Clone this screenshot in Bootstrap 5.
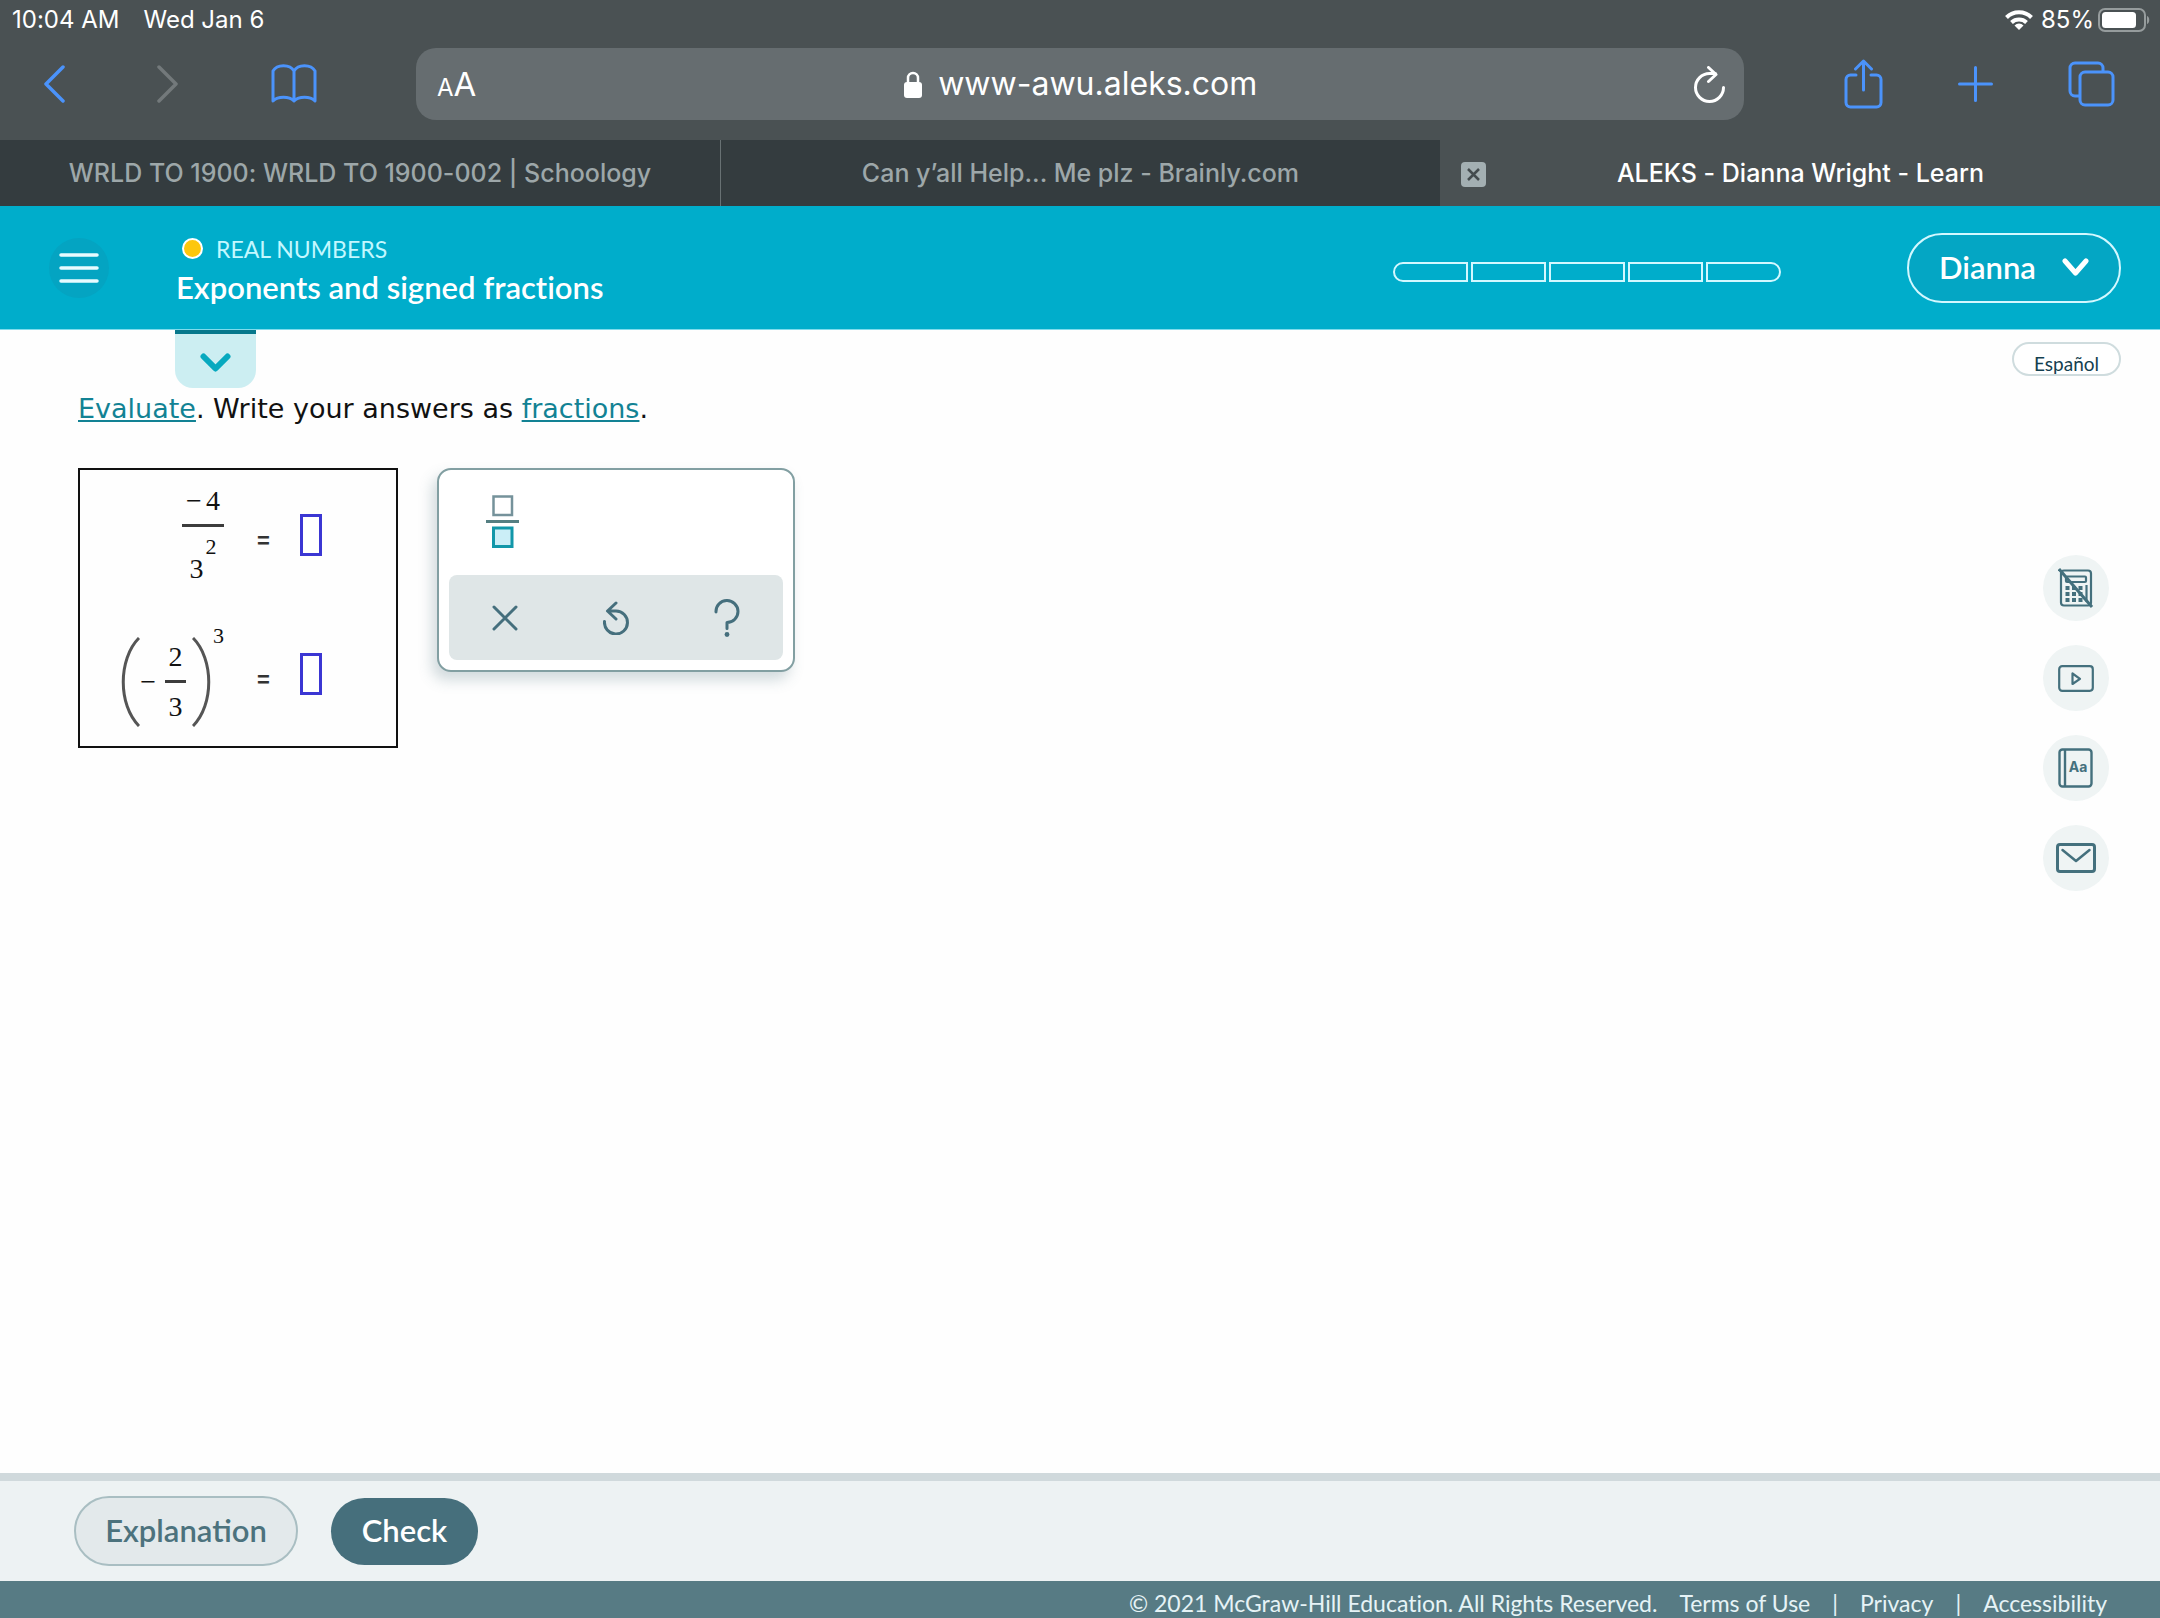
<!DOCTYPE html>
<html lang="en">
<head>
<meta charset="utf-8">
<meta name="viewport" content="width=device-width, initial-scale=1">
<title>ALEKS - Dianna Wright - Learn</title>
<link href="https://cdn.jsdelivr.net/npm/bootstrap@5.3.0/dist/css/bootstrap.min.css" rel="stylesheet">
<style>
  body { background: #fefefe; color: #111; font-family: Lato, "Open Sans", sans-serif; font-variant-ligatures: none; }
  svg { display: block; flex: none; }
  .bare { background: none; border: 0; padding: 0; }
  .inherit { color: inherit; }

  /* Browser chrome */
  .chrome { background: #4a5153; color: #fff; font-family: Inter, Roboto, sans-serif; }
  .status { height: 40px; padding: 0 10px 0 12px; font-size: 24px; line-height: 40px; }
  .status-left { gap: 24px; }
  .tools { height: 100px; padding: 8px 45px 20px 43px; color: #4b93fb; }
  .tools-left { gap: 92px; margin-right: 99px; }
  .tools-right { gap: 75px; margin-left: 100px; }
  .forward { color: #73797b; }
  .address { height: 72px; border-radius: 20px; background: #666d70; padding: 0 19px 0 21px; color: #fff; }
  .address-size { font-size: 33px; line-height: 40px; padding-top: 3px; }
  .address-size small { font-size: 24px; }
  .address-input { width: 328px; color: #fff; font-size: 32px; line-height: 44px; outline: 0; }
  .tabs { height: 66px; }
  .tab-item { width: 33.3333%; padding-top: 2px; background: #343c3f; color: #9da7a9; font-size: 25px; font-weight: 500; }
  .tab-item + .tab-item { border-left: 1px solid #687173; }
  .tab-item.current { background: none; border: 0; color: #fff; padding: 2px 21px 0; }
  .tab-close { width: 25px; height: 25px; border-radius: 4px; background: #a3afb2; color: #434b4e; }
  .tab-item a { color: inherit; }

  /* Lesson header */
  .lesson { height: 124px; padding: 0 39px 0 49px; background: #00adcb; color: #fff; border-bottom: 1px solid #7fdcec; }
  .menu-btn { width: 60px; height: 60px; background: #04a4c2; color: #e8fbff; }
  .heading { margin-left: 67px; padding-top: 7px; }
  .topic { gap: 13px; font-size: 23px; line-height: 32px; color: #c3f8ff; padding-left: 6px; }
  .dot { width: 21px; height: 21px; background: #fdc70c; border: 2px solid #fff; }
  .lesson-title { font-size: 31px; line-height: 45px; font-weight: 600; }
  .steps { width: 388px; gap: 3px; margin: 8px 126px 0 0; }
  .steps span { flex: 1; height: 20px; border: 2px solid #d3f8ff; }
  .steps span:first-child { border-radius: 10px 0 0 10px; }
  .steps span:last-child { border-radius: 0 10px 10px 0; }
  .user-btn { width: 214px; height: 70px; border: 2px solid #d3f8ff; border-radius: 35px; background: #04a6c4; color: #fff; font-size: 31px; font-weight: 600; gap: 26px; }

  /* Question */
  .work { padding: 0 0 0 78px; }
  .drawer { width: 81px; height: 58px; margin-left: 97px; border-top: 4px solid #07788c; border-radius: 0 0 18px 18px; background: #cceef2; color: #07a9bf; padding-top: 4px; }
  .prompt { font-family: "DejaVu Sans", sans-serif; font-size: 27px; line-height: 36px; color: #111; margin: 3px 0 41px; }
  .prompt a { color: #128294; }
  .panels { gap: 39px; }
  .problem { width: 320px; height: 280px; border: 2px solid #111; padding: 13px 74px 0 0; font-family: "Liberation Serif", serif; font-size: 28px; line-height: 36px; color: #111; }
  .equation { height: 139px; }
  .fraction { width: 42px; }
  .fraction.narrow { width: 21px; margin: 0 6px 0 9px; }
  .bar { width: 100%; height: 3px; margin: 5px 0 6px; background: #3c3c3c; }
  .base { padding-top: 18px; }
  .power { font-size: 22px; line-height: 28px; margin-left: 2px; }
  .group { height: 90px; margin-top: 15px; color: #555; }
  .group span { color: #111; }
  .equals { width: 13px; margin: 44px 30px 0 33px; font: bold 22px/28px "Liberation Sans", sans-serif; color: #333; }
  .answer { width: 22px; height: 42px; margin-top: 31px; border: 3px solid #3b36d3; background: #fff; padding: 0; border-radius: 0; }
  .palette { width: 358px; height: 204px; padding: 10px; border: 2px solid #829fa2; border-radius: 14px; background: #fff; box-shadow: -5px 8px 14px #4a707d40; }
  .palette-top { height: 95px; padding: 15px 0 0 37px; }
  .palette-keys { height: 85px; border-radius: 8px; background: #dfe6e7; color: #456f7d; }
  .palette-keys button { flex: 1; }

  /* Side rail */
  .rail { padding: 12px 39px 0 0; }
  .lang { width: 109px; height: 34px; border: 2px solid #cfdcde; border-radius: 17px; font-size: 19px; line-height: 24px; padding-top: 8px; color: #14404f; }
  .helpers { gap: 24px; margin: 179px 12px 0 0; }
  .helpers button { width: 66px; height: 66px; background: #eff4f4; color: #44707d; }

  /* Bottom */
  .actions { height: 108px; border-top: 8px solid #d0d9dc; background: #edf2f3; padding: 0 74px; gap: 33px; }
  .pill { height: 70px; border-radius: 35px; font-size: 31px; line-height: 36px; font-weight: 600; padding-bottom: 3px; }
  .pill-light { width: 224px; border: 2px solid #a9bec2; background: #e3e9eb; color: #4c727d; }
  .pill-dark { width: 147px; height: 67px; background: #466f7c; color: #fff; }
  .legal { height: 37px; padding: 6px 53px 0 0; background: #577b84; color: #e6f3f6; font-size: 23px; line-height: 32px; gap: 22px; }
  .legal a { color: inherit; }
</style>
</head>
<body class="d-flex flex-column min-vh-100">

<header class="chrome">
  <div class="status d-flex justify-content-between">
    <div class="status-left d-flex"><span>10:04 AM</span><span>Wed Jan 6</span></div>
    <div class="d-flex align-items-center">
      <svg width="28" height="20" viewBox="0 0 28 20" fill="none" stroke="#fff" stroke-width="4"><path d="M1.500 7.500a17.500 17.500 0 0 1 25 0M6.500 12.500a11 11 0 0 1 15 0"/><path d="M14 20l-4.500-4.600a6.500 6.500 0 0 1 9 0z" fill="#fff" stroke="none"/></svg>
      <span class="ms-2 me-1">85%</span>
      <svg width="52" height="24" viewBox="0 0 52 24"><rect x="1" y="1" width="46" height="22" rx="6" fill="none" stroke="#969c9d" stroke-width="2"/><rect x="4" y="4" width="34" height="16" rx="3.500" fill="#fff"/><path d="M49 8c3 1 3 7 0 8z" fill="#969c9d"/></svg>
    </div>
  </div>

  <div class="tools d-flex align-items-center">
    <div class="tools-left d-flex align-items-center">
      <button class="bare inherit" aria-label="Back"><svg width="22" height="38" viewBox="0 0 22 38" fill="none" stroke="currentColor" stroke-width="3.500" stroke-linecap="round" stroke-linejoin="round"><path d="M20 2 3 19l17 17"/></svg></button>
      <button class="bare forward" aria-label="Forward"><svg width="22" height="38" viewBox="0 0 22 38" fill="none" stroke="currentColor" stroke-width="3.500" stroke-linecap="round" stroke-linejoin="round"><path d="m2 2 17 17L2 36"/></svg></button>
      <button class="bare inherit" aria-label="Bookmarks"><svg width="46" height="40" viewBox="0 0 46 40" fill="none" stroke="currentColor" stroke-width="3" stroke-linejoin="round"><path d="M23 37V7C19 0 6 0 2 7v30c5-5 16-5 21 0 5-5 16-5 21 0V7c-4-7-17-7-21 0"/></svg></button>
    </div>
    <div class="address d-flex flex-fill align-items-center justify-content-between">
      <button class="bare text-white address-size" aria-label="Text size"><small>A</small>A</button>
      <div class="d-flex align-items-center gap-3">
        <svg width="18" height="27" viewBox="0 0 18 27"><rect y="11" width="18" height="16" rx="3" fill="#fff"/><path d="M4 13V7a5 5 0 0 1 10 0v6" fill="none" stroke="#fff" stroke-width="2.500"/></svg>
        <input class="bare address-input" type="text" value="www-awu.aleks.com" aria-label="Address">
      </div>
      <button class="bare text-white" aria-label="Reload"><svg width="31" height="37" viewBox="0 0 31 37" fill="none" stroke="currentColor" stroke-width="3" stroke-linecap="round" stroke-linejoin="round"><path d="M29.500 21.500A14 14 0 1 1 15.500 7.500h6M14.500 1.500l7.500 7-7.500 7"/></svg></button>
    </div>
    <div class="tools-right d-flex align-items-center">
      <button class="bare inherit" aria-label="Share"><svg width="39" height="50" viewBox="0 0 39 50" fill="none" stroke="currentColor" stroke-width="3" stroke-linecap="round" stroke-linejoin="round"><path d="M12 16H6.500a4.500 4.500 0 0 0-4.500 4.500v23A4.500 4.500 0 0 0 6.500 48h26a4.500 4.500 0 0 0 4.500-4.500v-23a4.500 4.500 0 0 0-4.500-4.500H27M19.500 31V2M11.500 10l8-8 8 8"/></svg></button>
      <button class="bare inherit" aria-label="New tab"><svg width="35" height="36" viewBox="0 0 35 36" fill="none" stroke="currentColor" stroke-width="3" stroke-linecap="round"><path d="M17.500 1.500v33M1.500 18h32"/></svg></button>
      <button class="bare inherit" aria-label="Tabs"><svg width="47" height="46" viewBox="0 0 47 46" fill="none" stroke="currentColor" stroke-width="3"><rect x="12" y="11" width="33" height="33" rx="5"/><path d="M12 35H7a5 5 0 0 1-5-5V7a5 5 0 0 1 5-5h23a5 5 0 0 1 5 5v4"/></svg></button>
    </div>
  </div>

  <nav class="tabs d-flex" aria-label="Open tabs">
    <div class="tab-item d-flex align-items-center justify-content-center"><a class="text-decoration-none" href="#">WRLD TO 1900: WRLD TO 1900-002 | Schoology</a></div>
    <div class="tab-item d-flex align-items-center justify-content-center"><a class="text-decoration-none" href="#">Can y’all Help... Me plz - Brainly.com</a></div>
    <div class="tab-item current d-flex align-items-center">
      <button class="bare tab-close d-flex align-items-center justify-content-center" aria-label="Close tab"><svg width="13" height="13" viewBox="0 0 13 13" stroke="currentColor" stroke-width="2.500"><path d="m1 1 11 11M12 1 1 12"/></svg></button>
      <a class="flex-fill text-center text-decoration-none pe-4" href="#">ALEKS - Dianna Wright - Learn</a>
    </div>
  </nav>
</header>

<section class="lesson d-flex align-items-center">
  <button class="menu-btn bare rounded-circle d-flex align-items-center justify-content-center" aria-label="Menu"><svg width="40" height="30" viewBox="0 0 40 30" stroke="currentColor" stroke-width="3.500" stroke-linecap="round"><path d="M2 2h36M2 15h36M2 28h36"/></svg></button>
  <div class="heading">
    <div class="topic d-flex align-items-center"><span class="dot rounded-circle"></span>REAL NUMBERS</div>
    <h1 class="lesson-title mb-0">Exponents and signed fractions</h1>
  </div>
  <div class="steps d-flex ms-auto" role="img" aria-label="Progress"><span></span><span></span><span></span><span></span><span></span></div>
  <button class="user-btn d-flex align-items-center justify-content-center">Dianna <svg width="27" height="19" viewBox="0 0 27 19" fill="none" stroke="currentColor" stroke-width="5" stroke-linecap="round" stroke-linejoin="round"><path d="m3 3 10.500 12L24 3"/></svg></button>
</section>

<main class="work d-flex flex-fill justify-content-between">
  <div>
    <button class="drawer d-flex align-items-center justify-content-center border-start-0 border-end-0 border-bottom-0" aria-label="Show details"><svg width="31" height="20" viewBox="0 0 31 20" fill="none" stroke="currentColor" stroke-width="6" stroke-linecap="round" stroke-linejoin="round"><path d="m3.500 3.500 12 12 12-12"/></svg></button>
    <p class="prompt"><a href="#">Evaluate</a>. Write your answers as <a href="#">fractions</a>.</p>
    <div class="panels d-flex align-items-start">
      <div class="problem">
        <div class="equation d-flex justify-content-end align-items-start">
          <div class="fraction d-flex flex-column align-items-center">
            <div class="d-flex gap-1"><span>−</span><span>4</span></div><div class="bar"></div>
            <div class="d-flex align-items-start"><span class="base">3</span><span class="power">2</span></div>
          </div>
          <span class="equals">=</span>
          <input class="answer" type="text" aria-label="First answer">
        </div>
        <div class="equation d-flex justify-content-end align-items-start">
          <div class="group d-flex align-items-center">
            <svg width="19" height="90" viewBox="0 0 19 90" fill="none" stroke="currentColor" stroke-width="3"><path d="M18 1C-3 22-3 68 18 89"/></svg>
            <span>−</span>
            <div class="fraction narrow d-flex flex-column align-items-center"><span>2</span><div class="bar"></div><span>3</span></div>
            <svg width="19" height="90" viewBox="0 0 19 90" fill="none" stroke="currentColor" stroke-width="3"><path d="M1 1C22 22 22 68 1 89"/></svg>
          </div>
          <span class="power">3</span>
          <span class="equals">=</span>
          <input class="answer" type="text" aria-label="Second answer">
        </div>
      </div>

      <div class="palette">
        <div class="palette-top">
          <button class="bare" aria-label="Fraction"><svg width="34" height="54" viewBox="0 0 34 54"><rect x="7.500" y="1.500" width="18.500" height="18.500" fill="#fff" stroke="#75929b" stroke-width="2.500"/><path d="M0 26.500h33" stroke="#557f82" stroke-width="3"/><rect x="7.500" y="33" width="18.500" height="18.500" fill="#cbeef7" stroke="#1297a9" stroke-width="3"/></svg></button>
        </div>
        <div class="palette-keys d-flex align-items-center">
          <button class="bare inherit d-flex justify-content-center" aria-label="Clear"><svg width="26" height="26" viewBox="0 0 26 26" fill="none" stroke="currentColor" stroke-width="3" stroke-linecap="round"><path d="m2 2 22 22M24 2 2 24"/></svg></button>
          <button class="bare inherit d-flex justify-content-center" aria-label="Undo"><svg width="26" height="34" viewBox="0 0 26 34" fill="none" stroke="currentColor" stroke-width="3" stroke-linecap="round" stroke-linejoin="round"><path d="M1.500 20.500A11.500 11.500 0 1 0 13 10H5M13 2 4.500 10l8.500 8"/></svg></button>
          <button class="bare inherit d-flex justify-content-center" aria-label="Help"><svg width="26" height="38" viewBox="0 0 26 38" fill="none" stroke="currentColor" stroke-width="3" stroke-linecap="round" stroke-linejoin="round"><path d="M2 13a11 11 0 1 1 11 10.500v6"/><circle cx="13" cy="35.500" r="2.400" fill="currentColor" stroke="none"/></svg></button>
        </div>
      </div>
    </div>
  </div>

  <aside class="rail d-flex flex-column align-items-end">
    <button class="lang bg-white">Español</button>
    <div class="helpers d-flex flex-column">
      <button class="bare rounded-circle d-flex align-items-center justify-content-center" aria-label="Calculator off"><svg width="36" height="40" viewBox="0 0 36 40" fill="none" stroke="currentColor" stroke-width="2.200"><rect x="3" y="2.500" width="30" height="35" rx="3"/><rect x="8" y="8.500" width="20" height="5.500" rx="1"/><path stroke-width="4" stroke-dasharray="4 2.500" d="M7.500 20h17M7.500 26h17M7.500 32h17"/><path d="M28.500 17v17"/><path stroke-width="3" d="m1 1 33 38"/></svg></button>
      <button class="bare rounded-circle d-flex align-items-center justify-content-center" aria-label="Video"><svg width="36" height="27" viewBox="0 0 36 27" fill="none" stroke="currentColor" stroke-width="2.200" stroke-linejoin="round"><rect x="1.200" y="1.200" width="33.600" height="24.600" rx="3"/><path d="M14.500 8.500v10.500l7.500-5.200z"/></svg></button>
      <button class="bare rounded-circle d-flex align-items-center justify-content-center" aria-label="Dictionary"><svg width="36" height="40" viewBox="0 0 36 40" fill="none" stroke="currentColor" stroke-width="2.400"><rect x="1.500" y="1.500" width="32" height="37" rx="3"/><path d="M7 2v36"/><text x="20" y="24" text-anchor="middle" font-family="Inter, sans-serif" font-size="14" font-weight="700" fill="currentColor" stroke="none">Aa</text></svg></button>
      <button class="bare rounded-circle d-flex align-items-center justify-content-center" aria-label="Message"><svg width="40" height="30" viewBox="0 0 40 30" fill="none" stroke="currentColor" stroke-width="3" stroke-linejoin="round"><rect x="1.500" y="1.500" width="37" height="27" rx="2.500"/><path stroke-width="2.500" stroke-linecap="round" d="M6.500 7 20 18 33.500 7"/></svg></button>
    </div>
  </aside>
</main>

<section class="actions d-flex align-items-center">
  <button class="pill pill-light">Explanation</button>
  <button class="pill pill-dark border-0">Check</button>
</section>
<footer class="legal d-flex justify-content-end">
  <span>© 2021 McGraw-Hill Education. All Rights Reserved.</span>
  <a class="text-decoration-none" href="#">Terms of Use</a><span>|</span>
  <a class="text-decoration-none" href="#">Privacy</a><span>|</span>
  <a class="text-decoration-none" href="#">Accessibility</a>
</footer>

<script src="https://cdn.jsdelivr.net/npm/bootstrap@5.3.0/dist/js/bootstrap.bundle.min.js"></script>
</body>
</html>
